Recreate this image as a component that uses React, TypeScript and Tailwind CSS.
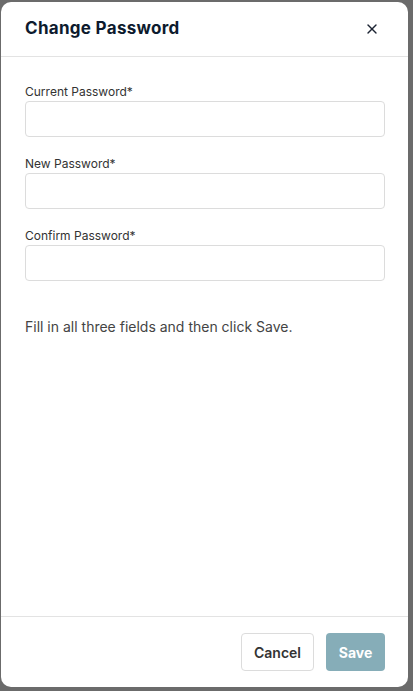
import React from 'react';
import { X } from 'lucide-react';

const fields = ['Current Password*', 'New Password*', 'Confirm Password*'];

export default function App() {
  return (
    <div className="h-[691px] w-[413px] bg-[#6b6b6b] pl-px pt-[2px] font-['Inter',sans-serif]">
      <div className="flex h-[685px] w-[407px] flex-col rounded-[10px] bg-white">
        <div className="flex h-[55px] items-center justify-between border-b border-[#e3e3e3] pl-6 pr-[28px]">
          <h2 className="text-[17px] font-bold tracking-[0.3px] text-[#0d1b2e]">Change Password</h2>
          <button className="text-[#1c2433]">
            <X size={16} strokeWidth={2} />
          </button>
        </div>

        <div className="flex-1 pl-6 pr-[23px] pt-[28px]">
          <div className="flex flex-col gap-[20px]">
            {fields.map(f => (
              <div key={f} className="flex flex-col gap-[2px]">
                <label className="text-[12px] leading-[14px] text-[#333]">{f}</label>
                <input type="password" className="h-[36px] w-full rounded-[4px] border border-[#dcdcdc] bg-white" />
              </div>
            ))}
          </div>
          <p className="mt-[35px] text-[14px] text-[#444]">Fill in all three fields and then click Save.</p>
        </div>

        <div className="flex h-[71px] items-center justify-end gap-3 border-t border-[#e3e3e3] pr-[23px]">
          <button className="h-[38px] w-[73px] rounded-[4px] border border-[#dcdcdc] bg-white text-[14px] font-semibold text-[#333]">
            Cancel
          </button>
          <button className="h-[38px] w-[59px] rounded-[4px] bg-[#86adb8] text-[14px] font-bold text-white">
            Save
          </button>
        </div>
      </div>
    </div>
  );
}
